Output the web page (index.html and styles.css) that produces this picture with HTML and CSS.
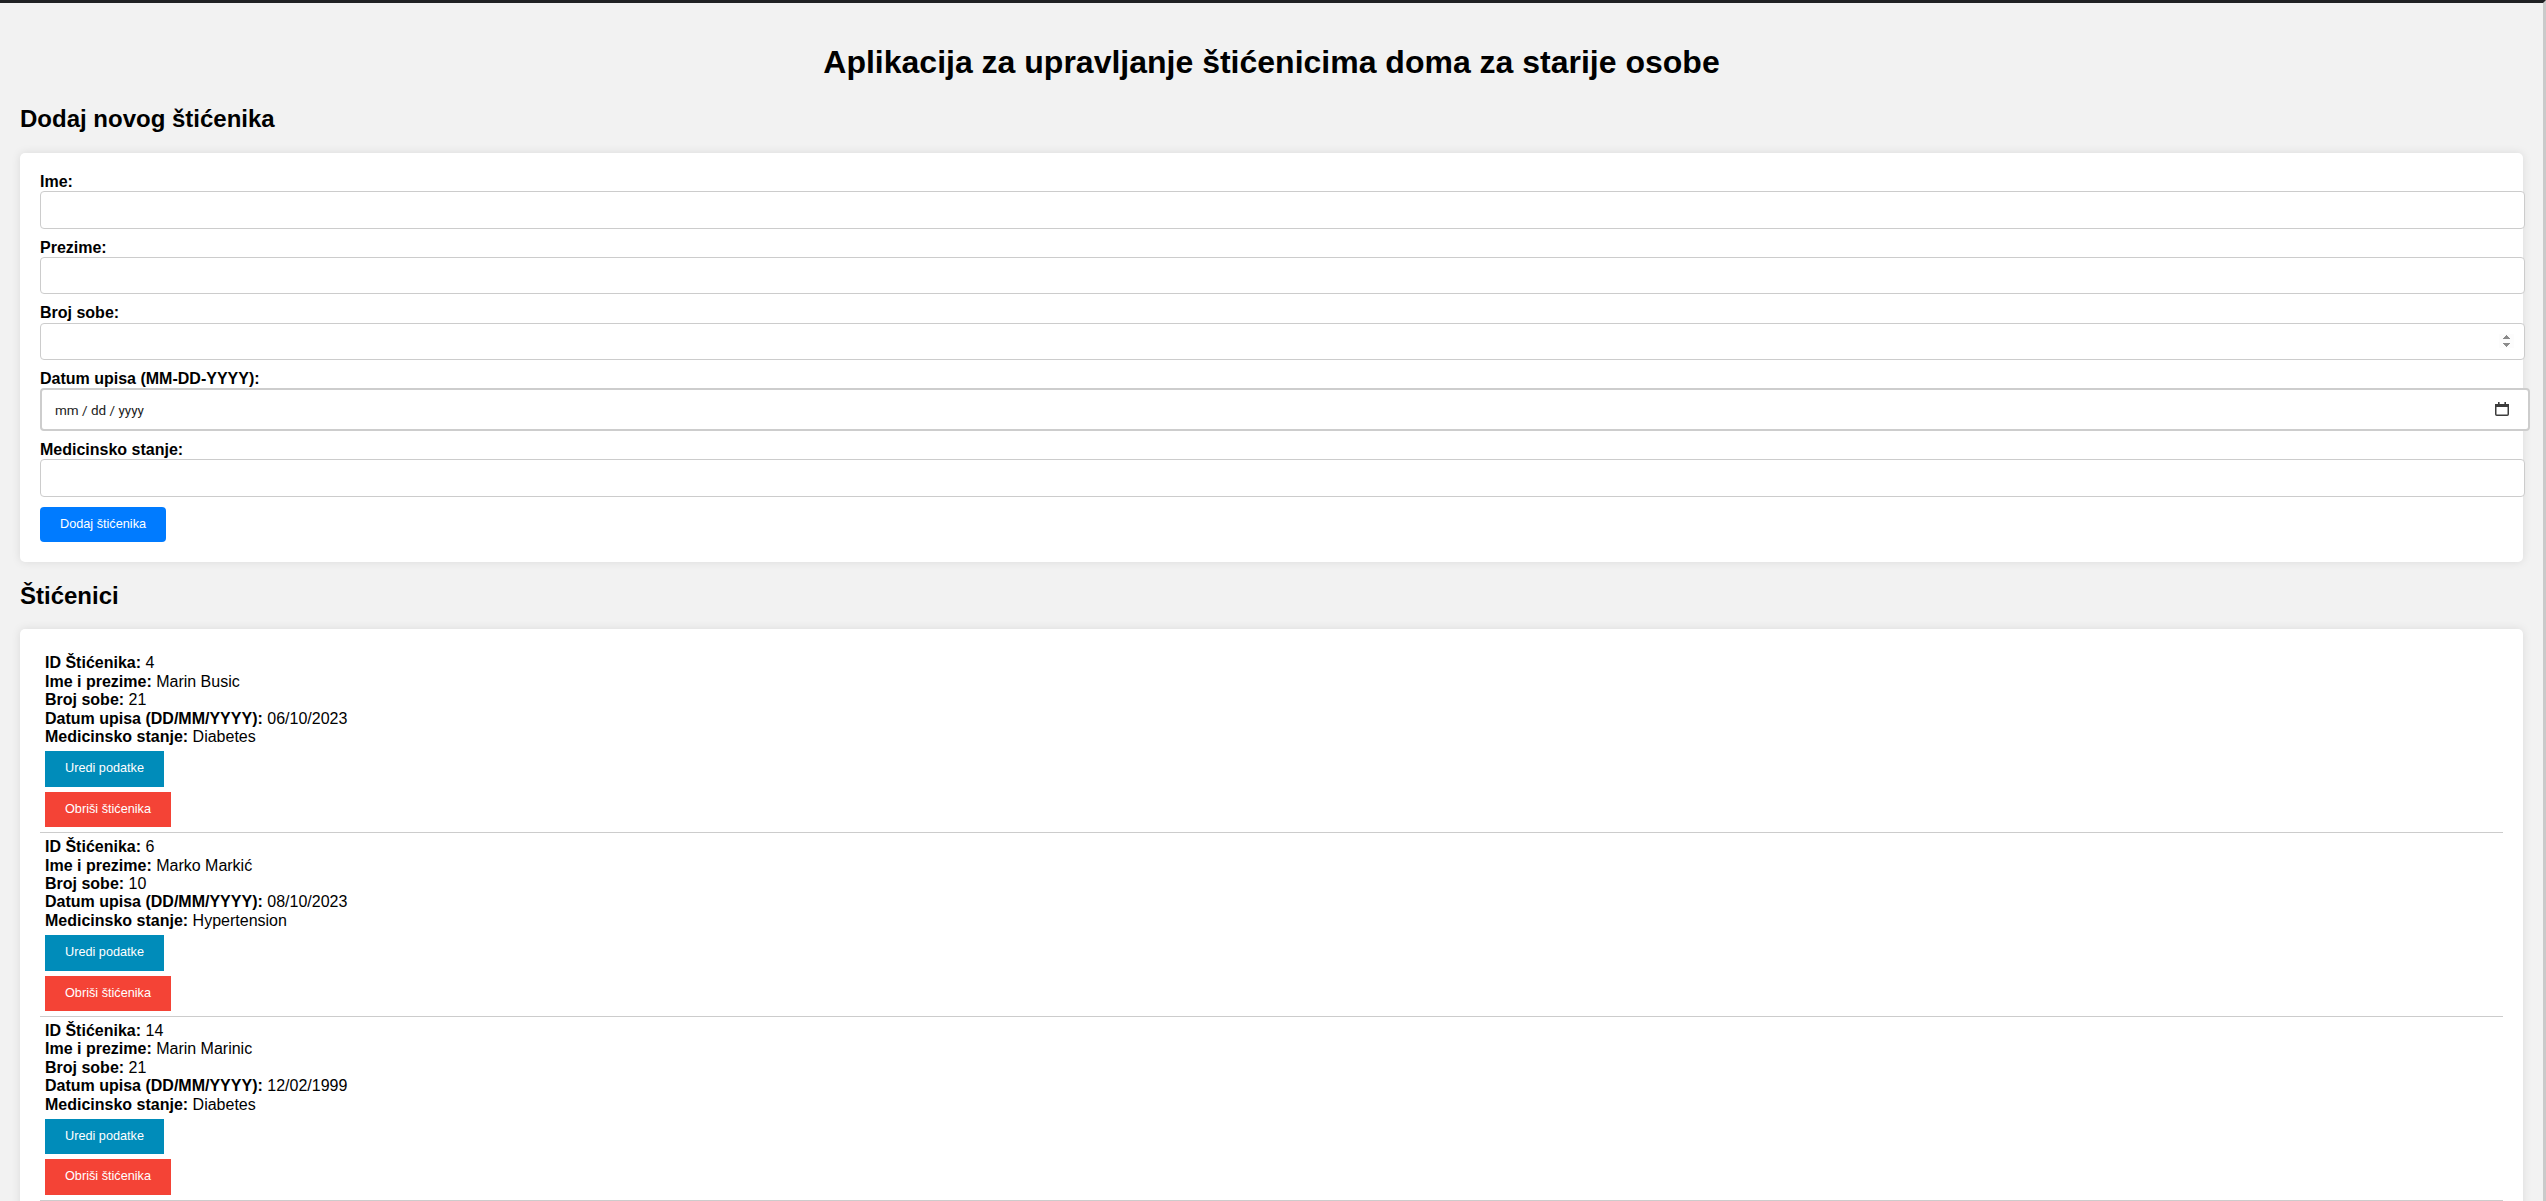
FILE: index.html
```html
<!DOCTYPE html>
<html lang="hr">
<head>
<meta charset="utf-8">
<title>Dom za starije osobe</title>
<link rel="stylesheet" href="styles.css">
</head>
<body>
<h1>Aplikacija za upravljanje štićenicima doma za starije osobe</h1>

<h2>Dodaj novog štićenika</h2>
<form class="card form">
  <label for="ime">Ime:</label>
  <input type="text" id="ime" class="field">
  <label for="prezime">Prezime:</label>
  <input type="text" id="prezime" class="field">
  <label for="soba">Broj sobe:</label>
  <input type="number" id="soba" class="field">
  <label for="datum">Datum upisa (MM-DD-YYYY):</label>
  <div class="date-wrap">
    <input type="text" id="datum" class="field field-date" placeholder="mm / dd / yyyy">
    <svg class="cal-icon" width="16" height="16" viewBox="0 0 16 16" aria-hidden="true">
      <rect x="1.75" y="3.75" width="12.5" height="10.5" rx="1" fill="none" stroke="#3c3c3c" stroke-width="1.5"/>
      <rect x="1" y="3" width="14" height="3" fill="#3c3c3c"/>
      <rect x="4" y="1" width="1.6" height="3" fill="#3c3c3c"/>
      <rect x="10.4" y="1" width="1.6" height="3" fill="#3c3c3c"/>
    </svg>
  </div>
  <label for="stanje">Medicinsko stanje:</label>
  <input type="text" id="stanje" class="field">
  <button type="button" class="btn btn-add">Dodaj štićenika</button>
</form>

<h2>Štićenici</h2>
<ul class="card list">
  <li class="resident">
    <strong>ID Štićenika:</strong> 4<br>
    <strong>Ime i prezime:</strong> Marin Busic<br>
    <strong>Broj sobe:</strong> 21<br>
    <strong>Datum upisa (DD/MM/YYYY):</strong> 06/10/2023<br>
    <strong>Medicinsko stanje:</strong> Diabetes
    <button type="button" class="btn btn-edit">Uredi podatke</button>
    <button type="button" class="btn btn-delete">Obriši štićenika</button>
  </li>
  <li class="resident">
    <strong>ID Štićenika:</strong> 6<br>
    <strong>Ime i prezime:</strong> Marko Markić<br>
    <strong>Broj sobe:</strong> 10<br>
    <strong>Datum upisa (DD/MM/YYYY):</strong> 08/10/2023<br>
    <strong>Medicinsko stanje:</strong> Hypertension
    <button type="button" class="btn btn-edit">Uredi podatke</button>
    <button type="button" class="btn btn-delete">Obriši štićenika</button>
  </li>
  <li class="resident">
    <strong>ID Štićenika:</strong> 14<br>
    <strong>Ime i prezime:</strong> Marin Marinic<br>
    <strong>Broj sobe:</strong> 21<br>
    <strong>Datum upisa (DD/MM/YYYY):</strong> 12/02/1999<br>
    <strong>Medicinsko stanje:</strong> Diabetes
    <button type="button" class="btn btn-edit">Uredi podatke</button>
    <button type="button" class="btn btn-delete">Obriši štićenika</button>
  </li>
</ul>
</body>
</html>
```

FILE: styles.css
```css
html {
  border-top: 3px solid #202124;
  border-right: 3px solid #cacaca;
  background: #f2f2f2;
}

body {
  margin: 0;
  padding: 20px;
  background: #f2f2f2;
  font-family: "Liberation Sans", Arial, sans-serif;
  font-size: 16px;
  line-height: 1.15;
  color: #000;
}

h1 {
  text-align: center;
  font-size: 32px;
  margin: 21.44px 0 24px;
}

h2 {
  font-size: 24px;
  margin: 19.92px 0;
}

.card {
  background: #fff;
  padding: 20px;
  border-radius: 5px;
  box-shadow: 0 0 10px rgba(0, 0, 0, 0.1);
}

.form label {
  display: block;
  font-weight: bold;
}

.field {
  display: block;
  width: 100%;
  height: 15.4px;
  padding: 10px;
  margin: 0 0 10px;
  border: 1px solid #ccc;
  border-radius: 4px;
  font-family: "Liberation Sans", Arial, sans-serif;
  font-size: 13.333px;
  background: #fff;
  outline: none;
}

.field::-webkit-inner-spin-button {
  opacity: 1;
}

.date-wrap {
  position: relative;
}

.field-date {
  height: 18.4px;
  border: 2px solid #cdcdcd;
  padding: 10px 10px 10px 13px;
  font-size: 13.5px;
  font-family: Roboto, "Liberation Sans", sans-serif;
}

.field-date::placeholder {
  color: #1a1a1a;
  opacity: 1;
}

.cal-icon {
  position: absolute;
  right: -7px;
  top: 13px;
}

.btn {
  display: block;
  font-family: "Liberation Sans", Arial, sans-serif;
  font-size: 12.7px;
  line-height: 15.4px;
  color: #fff;
  border: none;
  padding: 10px 20px;
  cursor: pointer;
}

.btn-add {
  background: #007bff;
  border-radius: 4px;
  margin-top: 2px;
}

.list {
  list-style: none;
  margin: 0;
}

.resident {
  padding: 5px;
  border-bottom: 1px solid #ccc;
}

.resident .btn {
  margin-top: 5px;
}

.btn-edit {
  background: #008cba;
}

.btn-delete {
  background: #f44336;
}
```
